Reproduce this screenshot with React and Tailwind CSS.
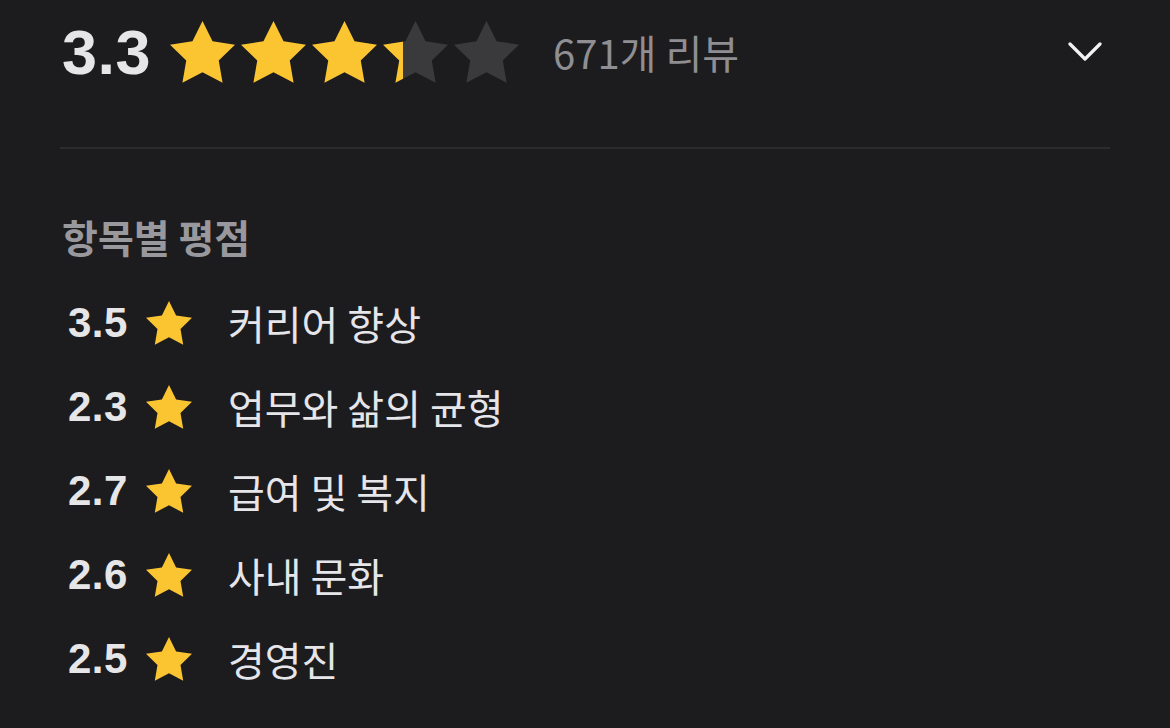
import React from "react";

const FONT = { fontFamily: '"Liberation Sans", "Noto Sans CJK KR", sans-serif' };
const KR = { fontFamily: '"Noto Sans CJK KR", "Liberation Sans", sans-serif' };

const STAR = "12,2 15.09,8.26 22,9.27 17,14.14 18.18,21.02 12,17.77 5.82,21.02 7,14.14 2,9.27 8.91,8.26";

const Star = ({ fill = 1, size = 64, id }) => (
  <svg width={size} height={size * 0.951} viewBox="2 2 20 19.02">
    <defs>
      <linearGradient id={id} x1="2" x2="22" y1="0" y2="0" gradientUnits="userSpaceOnUse">
        <stop offset={fill} stopColor="#fbc531" />
        <stop offset={fill} stopColor="#3a3a3c" />
      </linearGradient>
    </defs>
    <polygon points={STAR} fill={`url(#${id})`} />
  </svg>
);

const categories = [
  { score: "3.5", label: "커리어 향상" },
  { score: "2.3", label: "업무와 삶의 균형" },
  { score: "2.7", label: "급여 및 복지" },
  { score: "2.6", label: "사내 문화" },
  { score: "2.5", label: "경영진" },
];

export default function App() {
  const overall = 3.3;

  return (
    <div className="min-h-[728px] w-full bg-[#1c1c1e] px-[60px]" style={FONT}>
      {/* summary row */}
      <div className="flex h-[104px] items-center">
        <span className="ml-[2px] text-[63px] font-bold leading-none tracking-[0.5px] text-[#e6e6e8]">
          {overall}
        </span>
        <div className="ml-[19px] flex gap-[6px]">
          {[0, 1, 2, 3, 4].map(i => (
            <Star key={i} id={`s${i}`} size={65} fill={Math.max(0, Math.min(1, overall - i))} />
          ))}
        </div>
        <span className="ml-[34px] text-[40px] leading-none text-[#8e8e93]" style={KR}>
          671개 리뷰
        </span>
        <svg className="ml-auto mr-[8px]" width="34" height="20" viewBox="0 0 34 20">
          <polyline points="2,2 17,17 32,2" fill="none" stroke="#f2f2f4" strokeWidth="3.2" strokeLinecap="round" strokeLinejoin="round" />
        </svg>
      </div>

      <div className="mt-[43px] h-[2px] bg-[#2c2c2e]" />

      {/* per-category */}
      <h2 className="ml-[2px] mt-[63px] text-[39px] font-bold leading-[48px] text-[#98989d]" style={KR}>
        항목별 평점
      </h2>

      <div className="mt-[21px]">
        {categories.map((c, i) => (
          <div key={c.label} className="flex h-[84px] items-center">
            <span className="ml-[8px] w-[78px] text-[42px] font-bold leading-none tracking-[0.5px] text-[#e6e6e8]">
              {c.score}
            </span>
            <Star id={`c${i}`} size={46} fill={1} />
            <span className="ml-[36px] text-[40px] leading-none text-[#e5e5ea]" style={KR}>
              {c.label}
            </span>
          </div>
        ))}
      </div>
    </div>
  );
}
